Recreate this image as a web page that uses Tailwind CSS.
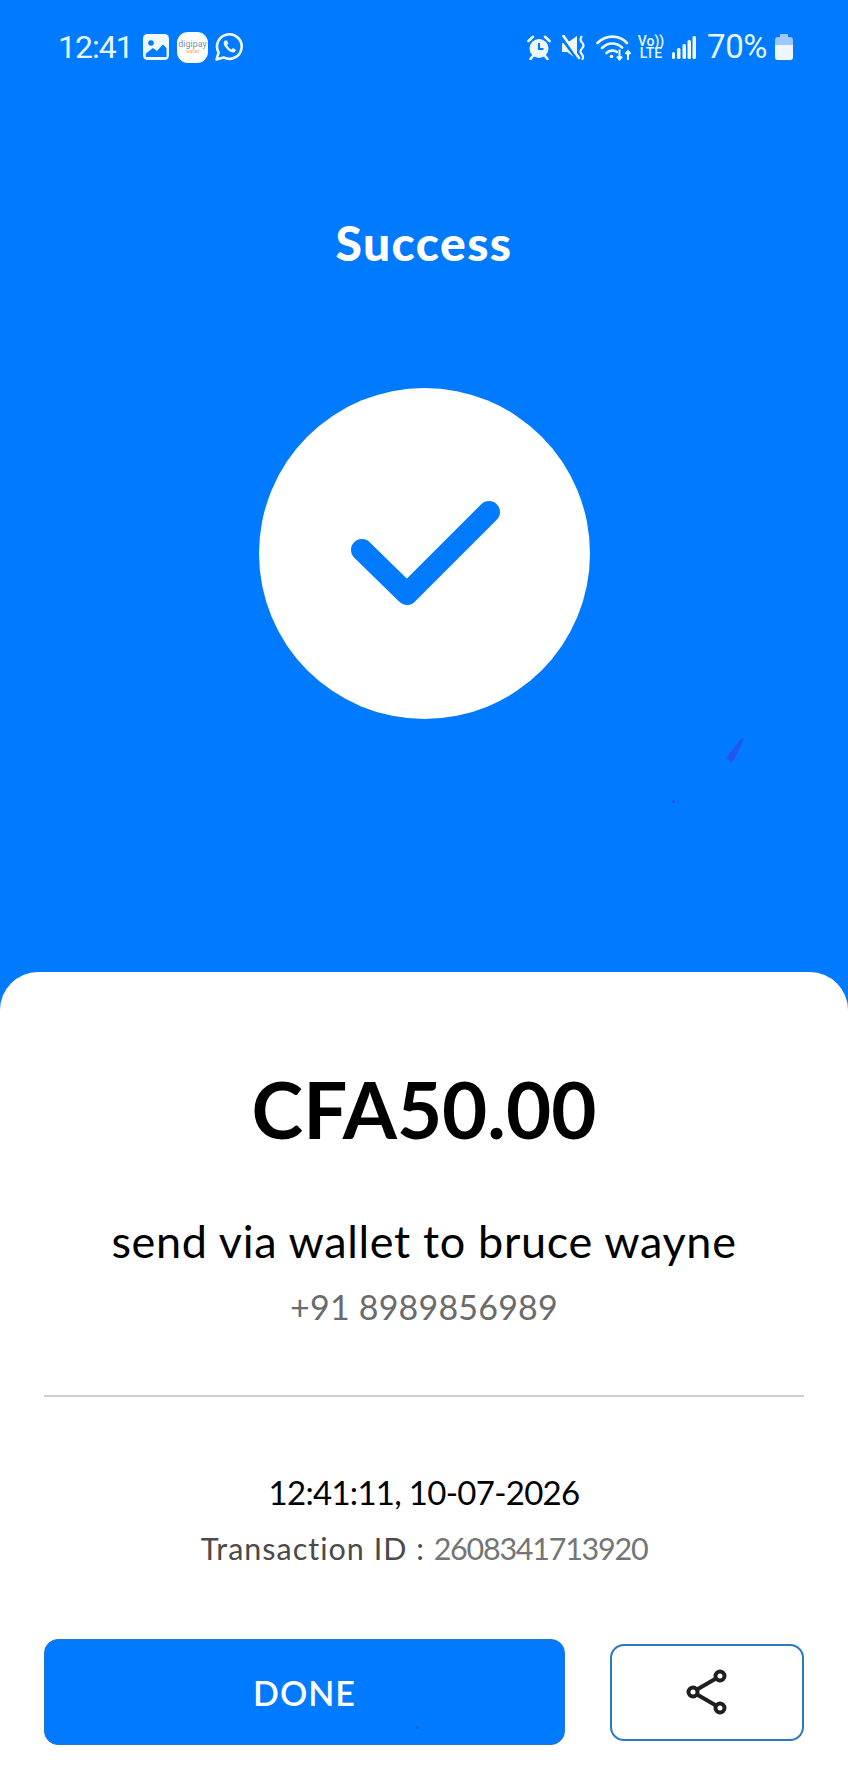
<!DOCTYPE html>
<html lang="en">
<head>
    <meta charset="UTF-8">
    <meta name="viewport" content="width=device-width, initial-scale=1.0">
    <title>Success</title>
    <script src="https://cdn.jsdelivr.net/npm/@tailwindcss/browser@4"></script>
</head>
<body class="bg-white">
<div class="relative w-[848px] h-[1779px] overflow-hidden bg-[#007aff] font-['Lato',sans-serif] flex flex-col">
    <!-- status bar -->
    <div class="h-[94px] flex items-start justify-between pl-[58px] pr-[55px] pt-[29px] text-[#e6f6ff]">
        <div class="flex items-center h-[36px]">
            <span class="font-['Roboto',sans-serif] text-[32px] leading-[36px] tracking-[-1px] w-[85px]">12:41</span>
            <svg width="26" height="26" viewBox="0 0 26 26"><rect width="26" height="26" rx="4.500" fill="#eef9ff"/><circle cx="8" cy="9" r="2.800" fill="#007aff"/><path d="M3 23 L3 19.500 L10 14 L14 17 L20 10.500 L23.500 14 L23.500 23 Z" fill="#007aff"/></svg>
            <div class="ml-[8px] w-[31px] h-[31px] rounded-[11px] bg-white flex flex-col items-center justify-center font-['Roboto',sans-serif]">
                <span class="text-[9px] leading-[9px] text-[#8a8f96]">digipay</span>
                <span class="text-[5px] leading-[5px] text-[#f0a070]">wallet</span>
            </div>
            <svg class="ml-[6px]" width="30" height="30" viewBox="0 0 30 30" fill="none"><path d="M2.500 27.500 L4.600 20.500 A12.300 12.300 0 1 1 9.600 25.400 Z" stroke="#eef9ff" stroke-width="2.600" stroke-linejoin="round"/><path d="M11 8.500 C9.300 9.500 9.300 12.500 11.500 15.300 C13.800 18.500 16.800 20.700 19.200 20.500 C20.800 20.300 21.900 19 21.900 17.700 L18.900 16 L17.400 17.500 C15.600 16.700 14 15 13.100 13 L14.400 11.500 L13 8.500 Z" fill="#eef9ff"/></svg>
        </div>
        <div class="flex items-center h-[36px]">
            <svg width="24" height="25" viewBox="0 0 24 25"><circle cx="12" cy="13.500" r="9.500" fill="#eef9ff"/><path d="M12 8 V14 H16.500" stroke="#007aff" stroke-width="2" fill="none"/><path d="M1.500 6 L6 1.800 M22.500 6 L18 1.800 M5.500 21.500 L3.500 24 M18.500 21.500 L20.500 24" stroke="#eef9ff" stroke-width="2.600" stroke-linecap="round"/></svg>
            <svg class="ml-[11px]" width="24" height="25" viewBox="0 0 24 25" fill="none"><path d="M0 8 H5 L15 1 V24 L5 17 H0 Z" fill="#eef9ff"/><path d="M0 3 L16 24" stroke="#007aff" stroke-width="4"/><path d="M1.500 1 L17 23" stroke="#eef9ff" stroke-width="2.600" stroke-linecap="round"/><path d="M20 1 Q17 4.500 20 7.500 Q23 10.500 20 13.500 Q17 16.500 20 19.500 Q22 22 20 25" stroke="#eef9ff" stroke-width="2.200"/></svg>
            <svg class="ml-[10px]" width="36" height="27" viewBox="0 0 36 27" fill="none"><path d="M1.500 9 C10 0.500 23 0.500 31 9 M6 14 C12 8 20 8 26 13.500 M10.500 19 C13.500 16 18.500 16 21 18" stroke="#eef9ff" stroke-width="2.600" stroke-linecap="round"/><circle cx="15.500" cy="22.500" r="1.800" fill="#eef9ff"/><path d="M23.500 15.500 V25 M21 22.500 L23.500 25.500 L26 22.500 M32 26 V17 M29.500 20 L32 17 L34.500 20" stroke="#eef9ff" stroke-width="2"/></svg>
            <div class="ml-[6px] w-[26px] flex flex-col items-center font-['Roboto',sans-serif] font-medium text-[14px] leading-[12.500px]"><span>Vo))</span><span>LTE</span></div>
            <svg class="ml-[8px]" width="24" height="25" viewBox="0 0 24 25"><rect x="0" y="17" width="3" height="7" rx="1.500" fill="#eef9ff"/><rect x="5" y="13" width="3.500" height="11" rx="1.500" fill="#eef9ff"/><rect x="10.500" y="9" width="3.500" height="15" rx="1.500" fill="#eef9ff"/><rect x="15.500" y="5" width="3.500" height="19" rx="1.500" fill="#eef9ff"/><rect x="20.500" y="1" width="3.500" height="23" rx="1.500" fill="#eef9ff"/></svg>
            <span class="ml-[11px] w-[61px] font-['Roboto',sans-serif] text-[33px] leading-[36px] tracking-[-0.4px]">70%</span>
            <svg class="ml-[7px]" width="18" height="26" viewBox="0 0 18 26"><path d="M5 0 H13 V3 H15 Q18 3 18 6 V23 Q18 26 15 26 H3 Q0 26 0 23 V6 Q0 3 3 3 H5 Z" fill="#9dc8ff"/><path d="M0 11 H18 V23 Q18 26 15 26 H3 Q0 26 0 23 Z" fill="#eef6ff"/></svg>
        </div>
    </div>

    <h1 class="mt-[122px] text-center text-white text-[48px] leading-[54px] font-black tracking-[1.400px]">Success</h1>

    <div class="mt-[118px] mx-auto w-[331px] h-[331px] rounded-full bg-white flex items-center justify-center">
        <svg width="331" height="331" viewBox="0 0 331 331" fill="none"><path d="M103 162 L148 206 L230 124" stroke="#007aff" stroke-width="22" stroke-linecap="round" stroke-linejoin="round"/></svg>
    </div>

    <!-- stray marks on the background -->
    <svg class="absolute left-[722px] top-[734px]" width="24" height="32" viewBox="0 0 24 32"><path d="M5 23 L18 6 Q21 3 22 5 L12 26 Q7 30 5 23 Z" fill="#2456ee"/></svg>
    <div class="absolute left-[672px] top-[800px] w-[3px] h-[3px] rounded-full bg-[#2456ee]"></div>
    <div class="absolute left-[416px] top-[1726px] w-[3px] h-[3px] rounded-full bg-[#1f5fc0]"></div>

    <!-- bottom sheet -->
    <div class="mt-auto h-[807px] bg-white rounded-t-[38px] flex flex-col items-center px-[44px]">
        <div class="mt-[91px] text-[78px] leading-[92px] font-bold text-black">CFA50.00</div>
        <div class="mt-[61px] text-[45px] leading-[50px] tracking-[0.67px] text-black">send via wallet to bruce wayne</div>
        <div class="mt-[21px] text-[34px] leading-[40px] tracking-[0.2px] text-[#6b6b6b]">+91 8989856989</div>
        <div class="mt-[68px] w-full h-[2px] bg-[#cfcfcf]"></div>
        <div class="mt-[74px] text-[33px] leading-[42px] tracking-[-0.7px] text-black">12:41:11, 10-07-2026</div>
        <div class="mt-[17px] text-[30.500px] leading-[36px] tracking-[1px] text-[#4a4a4a]">Transaction ID : <span class="tracking-[-1.250px] text-[#757575]">2608341713920</span></div>
        <div class="mt-[73px] w-full flex items-center justify-between">
            <button class="w-[521px] h-[106px] rounded-[14px] border border-[#1f78d6] bg-[#007aff] text-white text-[34px] font-semibold tracking-[1px]">DONE</button>
            <button class="w-[194px] h-[97px] rounded-[14px] border-2 border-[#2a78c8] bg-white flex items-center justify-center">
                <svg width="42" height="46" viewBox="0 0 42 46" fill="none" stroke="#1f1f1f" stroke-width="4"><circle cx="34" cy="7" r="4.500"/><circle cx="7" cy="23" r="4.500"/><circle cx="34" cy="39" r="4.500"/><path d="M11 20.500 L30 9.500 M11 25.500 L30 36.500"/></svg>
            </button>
        </div>
    </div>
</div>
</body>
</html>
